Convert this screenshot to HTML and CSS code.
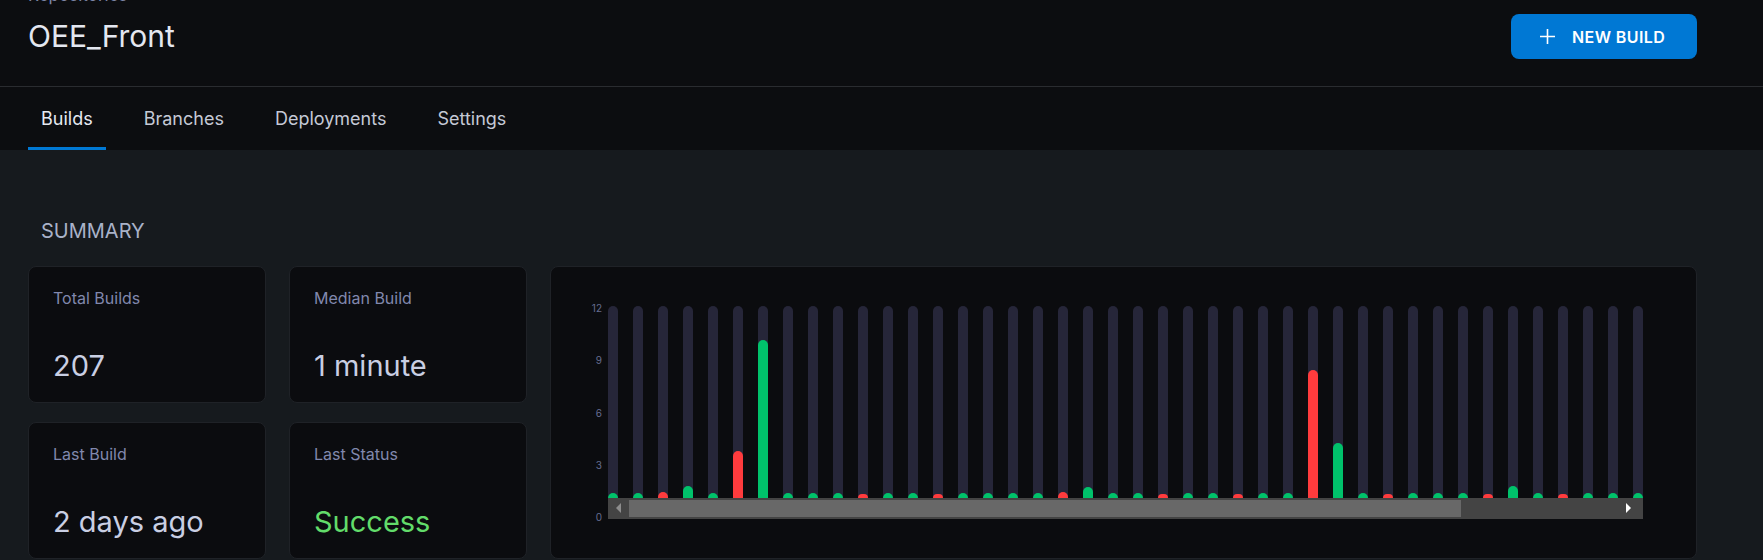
FILE: index.html
```html
<!DOCTYPE html>
<html lang="en">
<head>
    <meta charset="UTF-8">
    <title>OEE_Front - Builds</title>
    <link rel="stylesheet" href="styles.css">
</head>
<body>

<header class="topbar">
    <div class="repo-title">
        <div class="crumbs">Repositories <span class="chev">&rsaquo;</span></div>
        <h1>OEE_Front</h1>
    </div>
    <button class="new-build">
        <svg width="15" height="15" viewBox="0 0 15 15"><path d="M7.5 0v15M0 7.5h15" stroke="#fff" stroke-width="1.6"/></svg>
        <span>NEW BUILD</span>
    </button>
</header>

<nav class="tabs">
    <a class="tab active">Builds</a>
    <a class="tab">Branches</a>
    <a class="tab">Deployments</a>
    <a class="tab">Settings</a>
</nav>

<main class="content">
    <h2 class="section-title">SUMMARY</h2>

    <div class="summary">
        <div class="card">
            <div class="label">Total Builds</div>
            <div class="value">207</div>
        </div>
        <div class="card">
            <div class="label">Median Build</div>
            <div class="value">1 minute</div>
        </div>
        <div class="card chart-card">
            <div class="axis">
                <span>12</span><span>9</span><span>6</span><span>3</span><span>0</span>
            </div>
            <div class="plot">
                <div class="bars">
                    <div class="bar"><i class="ok" style="height:5px"></i></div>
                    <div class="bar"><i class="ok" style="height:5px"></i></div>
                    <div class="bar"><i class="fail" style="height:6px"></i></div>
                    <div class="bar"><i class="ok" style="height:12px"></i></div>
                    <div class="bar"><i class="ok" style="height:5px"></i></div>
                    <div class="bar"><i class="fail" style="height:47px"></i></div>
                    <div class="bar"><i class="ok" style="height:158px"></i></div>
                    <div class="bar"><i class="ok" style="height:5px"></i></div>
                    <div class="bar"><i class="ok" style="height:5px"></i></div>
                    <div class="bar"><i class="ok" style="height:5px"></i></div>
                    <div class="bar"><i class="fail" style="height:4px"></i></div>
                    <div class="bar"><i class="ok" style="height:5px"></i></div>
                    <div class="bar"><i class="ok" style="height:5px"></i></div>
                    <div class="bar"><i class="fail" style="height:4px"></i></div>
                    <div class="bar"><i class="ok" style="height:5px"></i></div>
                    <div class="bar"><i class="ok" style="height:5px"></i></div>
                    <div class="bar"><i class="ok" style="height:5px"></i></div>
                    <div class="bar"><i class="ok" style="height:5px"></i></div>
                    <div class="bar"><i class="fail" style="height:6px"></i></div>
                    <div class="bar"><i class="ok" style="height:11px"></i></div>
                    <div class="bar"><i class="ok" style="height:5px"></i></div>
                    <div class="bar"><i class="ok" style="height:5px"></i></div>
                    <div class="bar"><i class="fail" style="height:4px"></i></div>
                    <div class="bar"><i class="ok" style="height:5px"></i></div>
                    <div class="bar"><i class="ok" style="height:5px"></i></div>
                    <div class="bar"><i class="fail" style="height:4px"></i></div>
                    <div class="bar"><i class="ok" style="height:5px"></i></div>
                    <div class="bar"><i class="ok" style="height:5px"></i></div>
                    <div class="bar"><i class="fail" style="height:128px"></i></div>
                    <div class="bar"><i class="ok" style="height:55px"></i></div>
                    <div class="bar"><i class="ok" style="height:5px"></i></div>
                    <div class="bar"><i class="fail" style="height:4px"></i></div>
                    <div class="bar"><i class="ok" style="height:5px"></i></div>
                    <div class="bar"><i class="ok" style="height:5px"></i></div>
                    <div class="bar"><i class="ok" style="height:5px"></i></div>
                    <div class="bar"><i class="fail" style="height:4px"></i></div>
                    <div class="bar"><i class="ok" style="height:12px"></i></div>
                    <div class="bar"><i class="ok" style="height:5px"></i></div>
                    <div class="bar"><i class="fail" style="height:4px"></i></div>
                    <div class="bar"><i class="ok" style="height:5px"></i></div>
                    <div class="bar"><i class="ok" style="height:5px"></i></div>
                    <div class="bar"><i class="ok" style="height:5px"></i></div>
                </div>
                <div class="scrollbar">
                    <span class="arrow left"></span>
                    <span class="thumb"></span>
                    <span class="arrow right"></span>
                </div>
            </div>
        </div>
        <div class="card">
            <div class="label">Last Build</div>
            <div class="value">2 days ago</div>
        </div>
        <div class="card">
            <div class="label">Last Status</div>
            <div class="value success">Success</div>
        </div>
    </div>
</main>

</body>
</html>
```

FILE: styles.css
```css
body {
    margin: 0;
    background: #161a1e;
    font-family: Inter, "Noto Sans", sans-serif;
    color: #c9cfe3;
}

/* header */
.topbar {
    display: flex;
    justify-content: space-between;
    align-items: flex-start;
    height: 86px;
    padding: 0 66px 0 28px;
    background: #0c0d10;
    border-bottom: 1px solid #2a2c30;
}
.crumbs {
    margin-top: -14px;
    font-size: 17px;
    line-height: 18px;
    color: #7d85a6;
}
.chev {
    margin-left: 10px;
}
.repo-title h1 {
    margin: 14px 0 0;
    font-size: 30px;
    line-height: 36px;
    font-weight: 400;
    color: #e4e7f0;
}
.new-build {
    display: flex;
    align-items: center;
    gap: 17px;
    margin-top: 14px;
    width: 186px;
    height: 45px;
    padding: 0 0 0 29px;
    border: none;
    border-radius: 8px;
    background: #0078d4;
    color: #fff;
    font-family: inherit;
    font-size: 16px;
    font-weight: 600;
    letter-spacing: 0.4px;
}

/* tabs */
.tabs {
    display: flex;
    gap: 25px;
    height: 63px;
    padding-left: 28px;
    background: #0c0d10;
}
.tab {
    display: flex;
    align-items: center;
    box-sizing: border-box;
    height: 63px;
    padding: 3px 13px 0;
    font-size: 18px;
    color: #c5c9d6;
    border-bottom: 3px solid transparent;
}
.tab.active {
    color: #e6e9f1;
    border-bottom-color: #0078d4;
}

/* summary */
.content {
    padding: 0 66px 0 28px;
}
.section-title {
    margin: 69px 0 23px;
    padding-left: 13px;
    font-size: 20px;
    line-height: 24px;
    font-weight: 400;
    color: #a9b2c8;
}
.summary {
    display: grid;
    grid-template-columns: 238px 238px 1fr;
    grid-template-rows: 137px 137px;
    column-gap: 23px;
    row-gap: 19px;
}
.card {
    display: flex;
    flex-direction: column;
    justify-content: space-between;
    padding: 21px 24px 19px;
    background: #0b0c0f;
    border: 1px solid #1f2227;
    border-radius: 8px;
}
.label {
    font-size: 16px;
    line-height: 20px;
    color: #8188ad;
}
.value {
    font-size: 29px;
    line-height: 34px;
    color: #c9cfe3;
}
.value.success {
    color: #62dc6a;
}

/* chart */
.chart-card {
    grid-column: 3;
    grid-row: 1 / span 2;
    flex-direction: row;
    justify-content: flex-start;
    align-items: flex-start;
    padding: 39px 0 0 33px;
}
.axis {
    display: flex;
    flex-direction: column;
    justify-content: space-between;
    align-items: flex-end;
    width: 18px;
    height: 221px;
    margin-top: -4px;
    margin-right: 6px;
    font-size: 10px;
    line-height: 12px;
    color: #666c90;
}
.bars {
    display: flex;
    gap: 15px;
    height: 192px;
}
.bar {
    display: flex;
    align-items: flex-end;
    width: 10px;
    background: #262639;
    border-radius: 5px 5px 0 0;
    overflow: hidden;
}
.bar i {
    display: block;
    width: 10px;
    border-radius: 5px 5px 0 0;
}
.ok {
    background: #00c26b;
}
.fail {
    background: #ff3b3d;
}
.scrollbar {
    display: flex;
    align-items: center;
    width: 1035px;
    height: 21px;
    background: #444;
}
.thumb {
    width: 832px;
    height: 17px;
    background: #686868;
}
.arrow {
    width: 21px;
    height: 21px;
    position: relative;
}
.arrow::after {
    content: "";
    position: absolute;
    top: 5px;
    border-top: 5px solid transparent;
    border-bottom: 5px solid transparent;
}
.arrow.left::after {
    left: 8px;
    border-right: 5px solid #8d8d8d;
}
.arrow.right {
    margin-left: auto;
}
.arrow.right::after {
    left: 4px;
    border-left: 5px solid #fff;
}
```
